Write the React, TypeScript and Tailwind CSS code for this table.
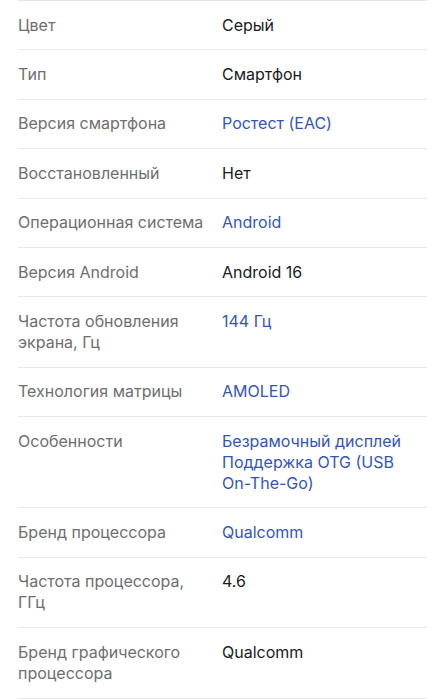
import React from "react";

type Row = { label: string; values: string[]; link?: boolean };

const rows: Row[] = [
  { label: "Цвет", values: ["Серый"] },
  { label: "Тип", values: ["Смартфон"] },
  { label: "Версия смартфона", values: ["Ростест (EAC)"], link: true },
  { label: "Восстановленный", values: ["Нет"] },
  { label: "Операционная система", values: ["Android"], link: true },
  { label: "Версия Android", values: ["Android 16"] },
  { label: "Частота обновления экрана, Гц", values: ["144 Гц"], link: true },
  { label: "Технология матрицы", values: ["AMOLED"], link: true },
  {
    label: "Особенности",
    values: ["Безрамочный дисплей", "Поддержка OTG (USB On-The-Go)"],
    link: true,
  },
  { label: "Бренд процессора", values: ["Qualcomm"], link: true },
  { label: "Частота процессора, ГГц", values: ["4.6"] },
  { label: "Бренд графического процессора", values: ["Qualcomm"] },
];

export default function App() {
  return (
    <div
      className="w-[445px] h-[699px] overflow-hidden bg-white px-[18px]"
      style={{ fontFamily: "Inter, 'Noto Sans', sans-serif" }}
    >
      <div className="border-t border-[#e4e4e4]">
        {rows.map((r, i) => (
          <div
            key={i}
            className="flex border-b border-[#e8e8e8] pt-[13.7px] pb-[13.7px] text-[16px] leading-[21px]"
          >
            <div className="w-[204px] shrink-0 pr-[16px] text-[#6e6e6e]">
              {r.label}
            </div>
            <div
              className={
                "flex-1 " + (r.link ? "text-[#3355bb]" : "text-[#1a1a1a]")
              }
            >
              {r.values.map((v, j) => (
                <div key={j}>{v}</div>
              ))}
            </div>
          </div>
        ))}
      </div>
    </div>
  );
}
